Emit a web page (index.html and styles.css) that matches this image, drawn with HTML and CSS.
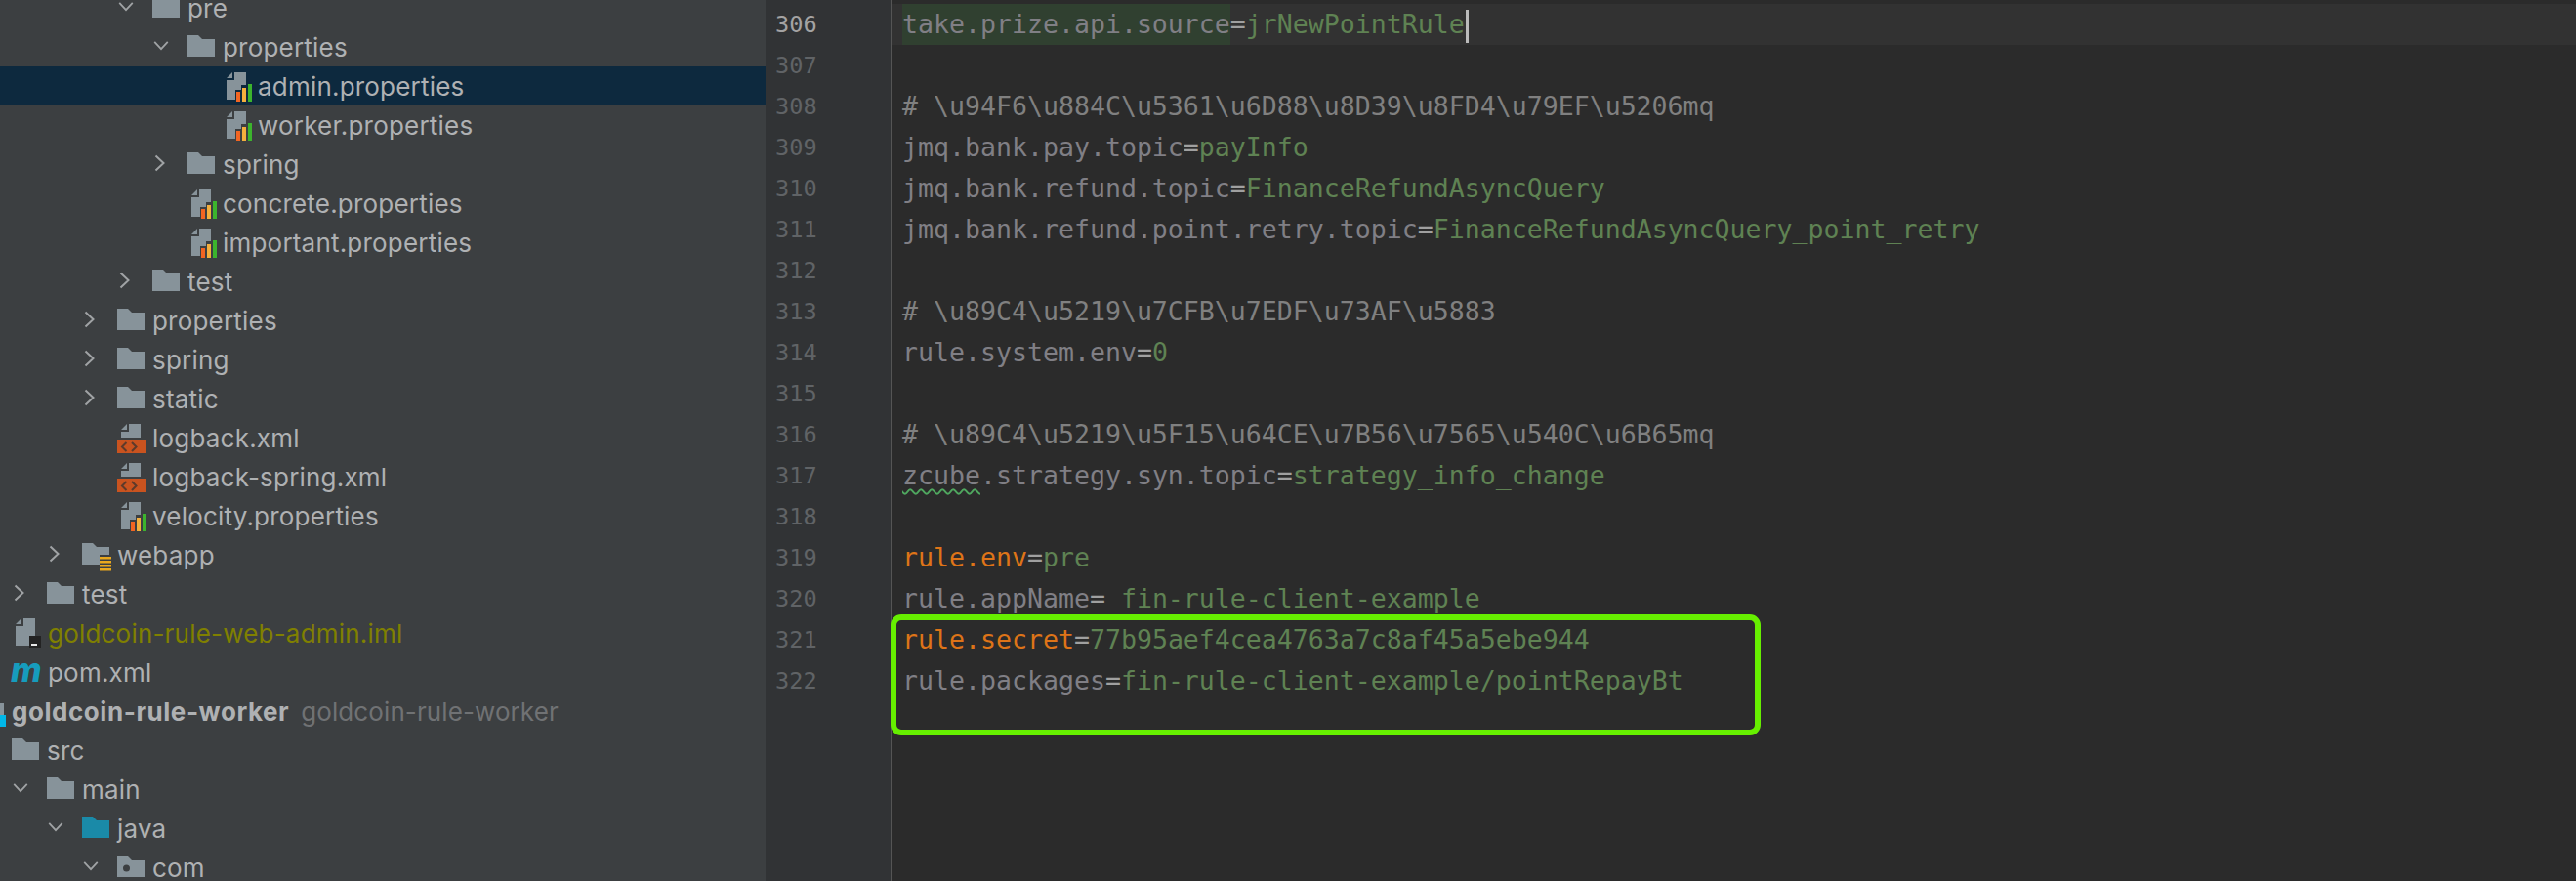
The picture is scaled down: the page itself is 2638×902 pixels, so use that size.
FILE: index.html
```html
<!DOCTYPE html>
<html lang="en">
<head>
<meta charset="utf-8">
<title>IDE</title>
<link rel="stylesheet" href="styles.css">
</head>
<body>
<svg class="defs" width="0" height="0" aria-hidden="true">
  <defs>
    <symbol id="chev-down" viewBox="0 0 20 14"><path d="M2.5 2.5 L10 10.5 L17.5 2.5" fill="none" stroke="#a0a3a5" stroke-width="2"/></symbol>
    <symbol id="chev-right" viewBox="0 0 14 20"><path d="M2.5 2.5 L10.5 10 L2.5 17.5" fill="none" stroke="#a0a3a5" stroke-width="2"/></symbol>
    <symbol id="folder" viewBox="0 0 28 22"><path d="M0 0H11L15 4H28V22H0Z" fill="#87939a"/></symbol>
    <symbol id="props" viewBox="0 0 26 30">
      <path d="M0 6 L6 0 V6Z M8 0 H20 V13 H15 V18 H9 V28 H0 V8 H8Z" fill="#87939a"/>
      <rect x="10" y="20" width="4" height="10" fill="#f26522"/>
      <rect x="16" y="16" width="4" height="14" fill="#f4af3d"/>
      <rect x="22" y="12" width="4" height="18" fill="#3cb42d"/>
    </symbol>
    <symbol id="xml" viewBox="0 0 30 30">
      <path d="M4 6 L10 0 V6Z M12 0 H24 V14 H4 V8 H12Z" fill="#87939a"/>
      <rect x="0" y="16" width="30" height="14" fill="#c9531f"/>
      <path d="M9.5 19 L5 23.5 L9.5 28 M15 19 L19.5 23.5 L15 28" fill="none" stroke="#5d3a2a" stroke-width="2"/>
    </symbol>
    <symbol id="iml" viewBox="0 0 26 30">
      <path d="M0 6 L6 0 V6Z M8 0 H20 V18 H14 V28 H0 V8 H8Z" fill="#87939a"/>
      <rect x="14" y="18" width="12" height="12" fill="#232323"/>
      <rect x="16" y="26" width="6" height="2" fill="#e8e8e8"/>
    </symbol>
    <symbol id="webapp" viewBox="0 0 30 30">
      <path d="M0 0H11L15 4H28V12H18V22H0Z" fill="#87939a"/>
      <path d="M18 14H30V16.5H18Z M18 18H30V20.5H18Z M18 22H30V24.500H18Z M18 26H30V28.500H18Z" fill="#e9a81e"/>
    </symbol>
  </defs>
</svg>

<main class="window">
  <aside class="sidebar">
    <ul class="tree">
      <li class="row lv-3"><svg class="chev down"><use href="#chev-down"/></svg><svg class="folder"><use href="#folder"/></svg><span class="name">pre</span></li>
      <li class="row lv-4"><svg class="chev down"><use href="#chev-down"/></svg><svg class="folder"><use href="#folder"/></svg><span class="name">properties</span></li>
      <li class="row lv-5 selected"><span class="chev blank"></span><svg class="prop"><use href="#props"/></svg><span class="name">admin.properties</span></li>
      <li class="row lv-5"><span class="chev blank"></span><svg class="prop"><use href="#props"/></svg><span class="name">worker.properties</span></li>
      <li class="row lv-4"><svg class="chev right"><use href="#chev-right"/></svg><svg class="folder"><use href="#folder"/></svg><span class="name">spring</span></li>
      <li class="row lv-4"><span class="chev blank"></span><svg class="prop"><use href="#props"/></svg><span class="name">concrete.properties</span></li>
      <li class="row lv-4"><span class="chev blank"></span><svg class="prop"><use href="#props"/></svg><span class="name">important.properties</span></li>
      <li class="row lv-3"><svg class="chev right"><use href="#chev-right"/></svg><svg class="folder"><use href="#folder"/></svg><span class="name">test</span></li>
      <li class="row lv-2"><svg class="chev right"><use href="#chev-right"/></svg><svg class="folder"><use href="#folder"/></svg><span class="name">properties</span></li>
      <li class="row lv-2"><svg class="chev right"><use href="#chev-right"/></svg><svg class="folder"><use href="#folder"/></svg><span class="name">spring</span></li>
      <li class="row lv-2"><svg class="chev right"><use href="#chev-right"/></svg><svg class="folder"><use href="#folder"/></svg><span class="name">static</span></li>
      <li class="row lv-2"><span class="chev blank"></span><svg class="xml"><use href="#xml"/></svg><span class="name">logback.xml</span></li>
      <li class="row lv-2"><span class="chev blank"></span><svg class="xml"><use href="#xml"/></svg><span class="name">logback-spring.xml</span></li>
      <li class="row lv-2"><span class="chev blank"></span><svg class="prop"><use href="#props"/></svg><span class="name">velocity.properties</span></li>
      <li class="row lv-1"><svg class="chev right"><use href="#chev-right"/></svg><svg class="web"><use href="#webapp"/></svg><span class="name">webapp</span></li>
      <li class="row lv-0"><svg class="chev right"><use href="#chev-right"/></svg><svg class="folder"><use href="#folder"/></svg><span class="name">test</span></li>
      <li class="row lv-0"><svg class="iml"><use href="#iml"/></svg><span class="name olive">goldcoin-rule-web-admin.iml</span></li>
      <li class="row lv-0"><span class="maven">m</span><span class="name">pom.xml</span></li>
      <li class="row lv-0"><span class="module-mark"></span><span class="name bold">goldcoin-rule-worker</span><span class="name dim">goldcoin-rule-worker</span></li>
      <li class="row lv-0"><svg class="folder"><use href="#folder"/></svg><span class="name">src</span></li>
      <li class="row lv-0"><svg class="chev down"><use href="#chev-down"/></svg><svg class="folder"><use href="#folder"/></svg><span class="name">main</span></li>
      <li class="row lv-1"><svg class="chev down"><use href="#chev-down"/></svg><svg class="folder"><path d="M0 0H11L15 4H28V22H0Z" fill="#1a8aa8"/></svg><span class="name">java</span></li>
      <li class="row lv-2"><svg class="chev down"><use href="#chev-down"/></svg><svg class="folder"><path fill-rule="evenodd" d="M0 0H11L15 4H28V22H0Z M6 13a3.500 3.500 0 1 0 7 0a3.500 3.500 0 1 0 -7 0Z" fill="#87939a"/></svg><span class="name">com</span></li>
    </ul>
  </aside>

  <section class="editor">
    <div class="gutter">
      <div class="num current">306</div><div class="num">307</div><div class="num">308</div><div class="num">309</div>
      <div class="num">310</div><div class="num">311</div><div class="num">312</div><div class="num">313</div>
      <div class="num">314</div><div class="num">315</div><div class="num">316</div><div class="num">317</div>
      <div class="num">318</div><div class="num">319</div><div class="num">320</div><div class="num">321</div>
      <div class="num">322</div>
    </div>
    <div class="code">
      <div class="line caret-line"><span class="key hit">take.prize.api.source</span><span class="eq">=</span><span class="val">jrNewPointRule</span><span class="caret"></span></div>
      <div class="line"></div>
      <div class="line com"># \u94F6\u884C\u5361\u6D88\u8D39\u8FD4\u79EF\u5206mq</div>
      <div class="line"><span class="key">jmq.bank.pay.topic</span><span class="eq">=</span><span class="val">payInfo</span></div>
      <div class="line"><span class="key">jmq.bank.refund.topic</span><span class="eq">=</span><span class="val">FinanceRefundAsyncQuery</span></div>
      <div class="line"><span class="key">jmq.bank.refund.point.retry.topic</span><span class="eq">=</span><span class="val">FinanceRefundAsyncQuery_point_retry</span></div>
      <div class="line"></div>
      <div class="line com"># \u89C4\u5219\u7CFB\u7EDF\u73AF\u5883</div>
      <div class="line"><span class="key">rule.system.env</span><span class="eq">=</span><span class="val">0</span></div>
      <div class="line"></div>
      <div class="line com"># \u89C4\u5219\u5F15\u64CE\u7B56\u7565\u540C\u6B65mq</div>
      <div class="line"><span class="key"><span class="typo">zcube</span>.strategy.syn.topic</span><span class="eq">=</span><span class="val">strategy_info_change</span></div>
      <div class="line"></div>
      <div class="line"><span class="hot">rule.env</span><span class="eq">=</span><span class="val">pre</span></div>
      <div class="line"><span class="key">rule.appName</span><span class="eq">=</span><span class="val"> fin-rule-client-example</span></div>
      <div class="line"><span class="hot">rule.secret</span><span class="eq">=</span><span class="val">77b95aef4cea4763a7c8af45a5ebe944</span></div>
      <div class="line"><span class="key">rule.packages</span><span class="eq">=</span><span class="val">fin-rule-client-example/pointRepayBt</span></div>
    </div>
    <div class="callout"></div>
  </section>
</main>
</body>
</html>
```
FILE: styles.css
```css
* { box-sizing: border-box; }
html, body { margin: 0; padding: 0; height: 100%; overflow: hidden; background: #2b2b2b; }
.defs { position: absolute; }
.window { display: flex; width: 2638px; height: 902px; overflow: hidden; }

.sidebar { flex: 0 0 784px; height: 902px; background: #3c3f41; overflow: hidden; }
.tree { list-style: none; margin: -12px 0 0; padding: 0; font: 26px/40px Inter, "Noto Sans", sans-serif; color: #afb1b3; }
.row { display: flex; align-items: center; height: 40px; white-space: nowrap; position: relative; }
.row.selected { background: #0d293e; }

.lv-0 { padding-left: 12px; }
.lv-1 { padding-left: 48px; }
.lv-2 { padding-left: 84px; }
.lv-3 { padding-left: 120px; }
.lv-4 { padding-left: 156px; }
.lv-5 { padding-left: 192px; }

.chev { flex: none; width: 36px; height: 20px; display: block; margin-bottom: 2px; }
.chev.down { padding: 0 18px 0 0; }
.chev.right { padding: 0 20px 0 0; }
.folder { flex: none; width: 28px; height: 22px; margin: 0 8px 2px 0; }
.prop { flex: none; width: 26px; height: 30px; margin: 2px 6px 0 4px; }
.xml { flex: none; width: 30px; height: 30px; margin: 2px 6px 0 0; }
.web { flex: none; width: 30px; height: 30px; margin: 6px 6px 0 0; }
.iml { flex: none; width: 26px; height: 30px; margin: 0 7px 0 4px; }
.maven { flex: none; width: 38px; margin: 0 0 4px -1px; color: #169cbd; font: italic 800 34px/40px Inter, sans-serif; }

.name { letter-spacing: .2px; padding-top: 2px; }
.olive { color: #808000; }
.bold { font-weight: 700; letter-spacing: .55px; margin-right: 12px; }
.dim { color: #707274; letter-spacing: .1px; }
.module-mark { position: absolute; left: 0; top: 12px; width: 6px; height: 24px; background: linear-gradient(#00b7e8, #00b7e8) left bottom / 6px 12px no-repeat, linear-gradient(#87939a, #87939a) left top / 4px 12px no-repeat; }

.editor { flex: 1; display: flex; height: 902px; position: relative; background: #2b2b2b; }
.gutter { flex: 0 0 129px; background: #313335; border-right: 1px solid #555555; padding: 4px 0 0 10px; font: 23.6px/42px "DejaVu Sans Mono", monospace; color: #606366; }
.num { height: 42px; }
.num.current { color: #a4a3a3; }
.code { flex: 1; padding-top: 4px; font: 26.57px/42px "DejaVu Sans Mono", monospace; color: #807f85; }
.line { height: 42px; padding-left: 11px; white-space: pre; position: relative; }
.caret-line { background: #323232; }
.hit { background: #304030; display: inline-block; }
.key { color: #807f85; }
.eq { color: #a0a0a0; }
.val { color: #5f8253; }
.hot { color: #de7418; }
.com { color: #808080; }
.typo { text-decoration: underline wavy #4fa85f 2px; text-underline-offset: 4px; }
.caret { display: inline-block; width: 3px; height: 34px; background: #bbbbbb; vertical-align: middle; margin-left: 1px; }

.callout { position: absolute; left: 128px; top: 629px; width: 891px; height: 124px; border: 6px solid #66ef00; border-radius: 11px; }
```
